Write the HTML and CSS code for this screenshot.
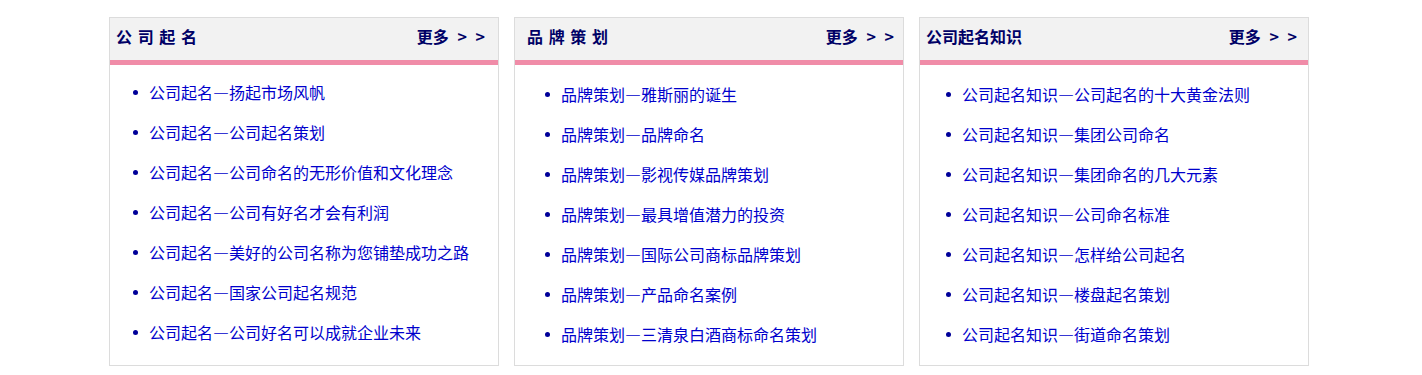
FILE: index.html
```html
<!DOCTYPE html>
<html lang="zh-CN">
<head>
  <meta charset="UTF-8">
  <title>公司起名</title>
  <link rel="stylesheet" href="styles.css">
</head>
<body>
<div class="wrap">
  <div class="box box-one">
    <div class="box-head">
      <h3>公 司 起 名</h3>
      <a href="#" class="more">更多 &gt; &gt;</a>
    </div>
    <ul class="news">
      <li><a href="#">公司起名—扬起市场风帆</a></li>
      <li><a href="#">公司起名—公司起名策划</a></li>
      <li><a href="#">公司起名—公司命名的无形价值和文化理念</a></li>
      <li><a href="#">公司起名—公司有好名才会有利润</a></li>
      <li><a href="#">公司起名—美好的公司名称为您铺垫成功之路</a></li>
      <li><a href="#">公司起名—国家公司起名规范</a></li>
      <li><a href="#">公司起名—公司好名可以成就企业未来</a></li>
    </ul>
  </div>

  <div class="box box-two">
    <div class="box-head">
      <h3>品 牌 策 划</h3>
      <a href="#" class="more">更多 &gt; &gt;</a>
    </div>
    <ul class="news">
      <li><a href="#">品牌策划—雅斯丽的诞生</a></li>
      <li><a href="#">品牌策划—品牌命名</a></li>
      <li><a href="#">品牌策划—影视传媒品牌策划</a></li>
      <li><a href="#">品牌策划—最具增值潜力的投资</a></li>
      <li><a href="#">品牌策划—国际公司商标品牌策划</a></li>
      <li><a href="#">品牌策划—产品命名案例</a></li>
      <li><a href="#">品牌策划—三清泉白酒商标命名策划</a></li>
    </ul>
  </div>

  <div class="box box-three">
    <div class="box-head">
      <h3>公司起名知识</h3>
      <a href="#" class="more">更多 &gt; &gt;</a>
    </div>
    <ul class="news">
      <li><a href="#">公司起名知识—公司起名的十大黄金法则</a></li>
      <li><a href="#">公司起名知识—集团公司命名</a></li>
      <li><a href="#">公司起名知识—集团命名的几大元素</a></li>
      <li><a href="#">公司起名知识—公司命名标准</a></li>
      <li><a href="#">公司起名知识—怎样给公司起名</a></li>
      <li><a href="#">公司起名知识—楼盘起名策划</a></li>
      <li><a href="#">公司起名知识—街道命名策划</a></li>
    </ul>
  </div>
</div>
</body>
</html>
```

FILE: styles.css
```css
/* Reset */
* {
  margin: 0;
  padding: 0;
  box-sizing: border-box;
}

body {
  background-color: #fff;
  font-family: "Noto Sans CJK SC", "Liberation Sans", sans-serif;
  font-size: 16px;
}

a {
  text-decoration: none;
}

/* Three columns */
.wrap {
  width: 1204px;
  margin: 17px auto 0;
  display: flex;
  gap: 15px;
}

.box {
  width: 390px;
  height: 349px;
  border: 1px solid #dcdcdc;
}

/* Box header */
.box-head {
  height: 47px;
  background-color: #f2f2f2;
  border-bottom: 5px solid #f08ca8;
  display: flex;
  justify-content: space-between;
  align-items: center;
  padding: 0 13px 6px 6px;
}

.box-head h3 {
  font-size: 16px;
  font-weight: bold;
  color: #000066;
  line-height: 24px;
  word-spacing: 2px;
}

.box-head .more {
  font-size: 16px;
  font-weight: bold;
  color: #000066;
  line-height: 24px;
  word-spacing: 5px;
}

.box-two .box-head {
  padding-left: 12px;
  padding-right: 9px;
}

.box-three .box-head {
  padding-right: 11px;
}

/* News list */
.news {
  list-style: none;
  padding: 7px 0 0 23px;
}

.news li {
  display: flex;
  align-items: center;
  height: 40px;
}

.news li::before {
  content: "";
  width: 5px;
  height: 5px;
  border-radius: 50%;
  background-color: #000099;
  margin-right: 11px;
}

.news a {
  color: #0000cc;
  line-height: 40px;
  font-variant-east-asian: full-width;
}

.box-two .news {
  padding-top: 9px;
  padding-left: 30px;
}

.box-three .news {
  padding-top: 9px;
  padding-left: 26px;
}
```
